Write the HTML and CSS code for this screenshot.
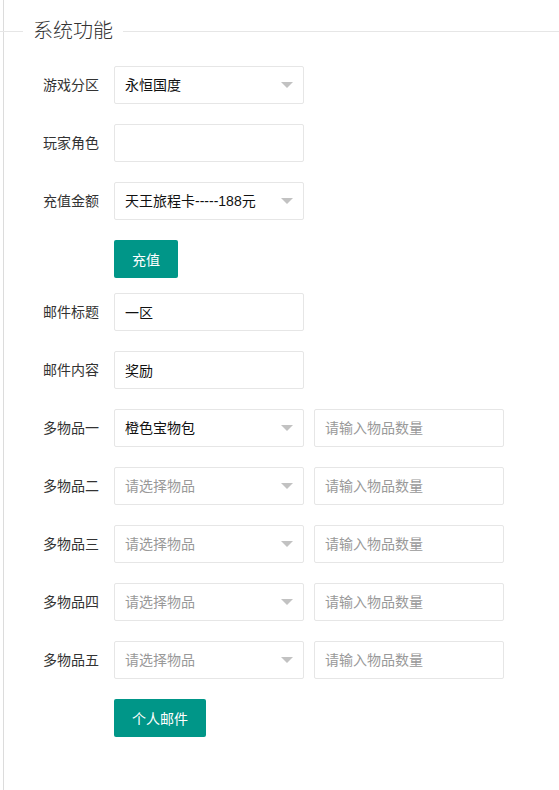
FILE: index.html
```html
<!DOCTYPE html>
<html lang="zh-CN">
<head>
    <meta charset="UTF-8">
    <meta name="viewport" content="width=device-width, initial-scale=1.0">
    <title>系统功能</title>
    <link rel="stylesheet" href="styles.css">
</head>
<body>
    <div class="page">
        <fieldset class="field-title">
            <legend>系统功能</legend>
        </fieldset>

        <form class="form">
            <div class="form-item">
                <label>游戏分区</label>
                <div class="select">永恒国度</div>
            </div>
            <div class="form-item">
                <label>玩家角色</label>
                <input type="text" class="input">
            </div>
            <div class="form-item">
                <label>充值金额</label>
                <div class="select">天王旅程卡-----188元</div>
            </div>
            <div class="form-item btn-row">
                <label></label>
                <button type="button" class="btn">充值</button>
            </div>
            <div class="form-item">
                <label>邮件标题</label>
                <input type="text" class="input" value="一区">
            </div>
            <div class="form-item">
                <label>邮件内容</label>
                <input type="text" class="input" value="奖励">
            </div>
            <div class="form-item">
                <label>多物品一</label>
                <div class="select">橙色宝物包</div>
                <input type="text" class="input" placeholder="请输入物品数量">
            </div>
            <div class="form-item">
                <label>多物品二</label>
                <div class="select empty">请选择物品</div>
                <input type="text" class="input" placeholder="请输入物品数量">
            </div>
            <div class="form-item">
                <label>多物品三</label>
                <div class="select empty">请选择物品</div>
                <input type="text" class="input" placeholder="请输入物品数量">
            </div>
            <div class="form-item">
                <label>多物品四</label>
                <div class="select empty">请选择物品</div>
                <input type="text" class="input" placeholder="请输入物品数量">
            </div>
            <div class="form-item">
                <label>多物品五</label>
                <div class="select empty">请选择物品</div>
                <input type="text" class="input" placeholder="请输入物品数量">
            </div>
            <div class="form-item">
                <label></label>
                <button type="button" class="btn">个人邮件</button>
            </div>
        </form>
    </div>
</body>
</html>
```

FILE: styles.css
```css
body {
    margin: 0;
    font-family: "Liberation Sans", "Noto Sans CJK SC", sans-serif;
    font-size: 14px;
    color: #333;
    background-color: #fff;
}
.page {
    margin-left: 3px;
    border-left: 1px solid #dcdcdc;
    padding-top: 16px;
    min-height: 774px;
}
.field-title {
    margin: 0 0 20px -4px;
    padding: 0;
    border: none;
    border-top: 1px solid #e6e6e6;
}
.field-title legend {
    margin-left: 23px;
    padding: 0 10px;
    font-size: 20px;
    font-weight: 300;
    line-height: 30px;
    color: #333;
}
.form {
    padding-left: 10px;
}
.form-item {
    display: flex;
    align-items: center;
    gap: 10px;
    margin-bottom: 20px;
}
.form-item.btn-row {
    margin-bottom: 15px;
}
.form-item label {
    box-sizing: border-box;
    width: 100px;
    margin-right: -10px;
    padding-right: 15px;
    text-align: right;
    line-height: 20px;
    color: #333;
}
.input,
.select {
    box-sizing: border-box;
    width: 190px;
    height: 38px;
    padding-left: 10px;
    border: 1px solid #e6e6e6;
    border-radius: 2px;
    background-color: #fff;
    font-family: inherit;
    font-size: 14px;
    color: #111;
    outline: none;
}
.input::placeholder {
    color: #999;
}
.select {
    position: relative;
    line-height: 36px;
}
.select.empty {
    color: #999;
}
.select::after {
    content: "";
    position: absolute;
    right: 10px;
    top: 50%;
    margin-top: -3px;
    border-style: solid;
    border-width: 6px 6px 0;
    border-color: #c2c2c2 transparent transparent;
}
.btn {
    height: 38px;
    padding: 0 18px;
    border: none;
    border-radius: 2px;
    background-color: #009688;
    color: #fff;
    font-family: inherit;
    font-size: 14px;
    cursor: pointer;
}
.btn:hover {
    opacity: 0.8;
}
```
